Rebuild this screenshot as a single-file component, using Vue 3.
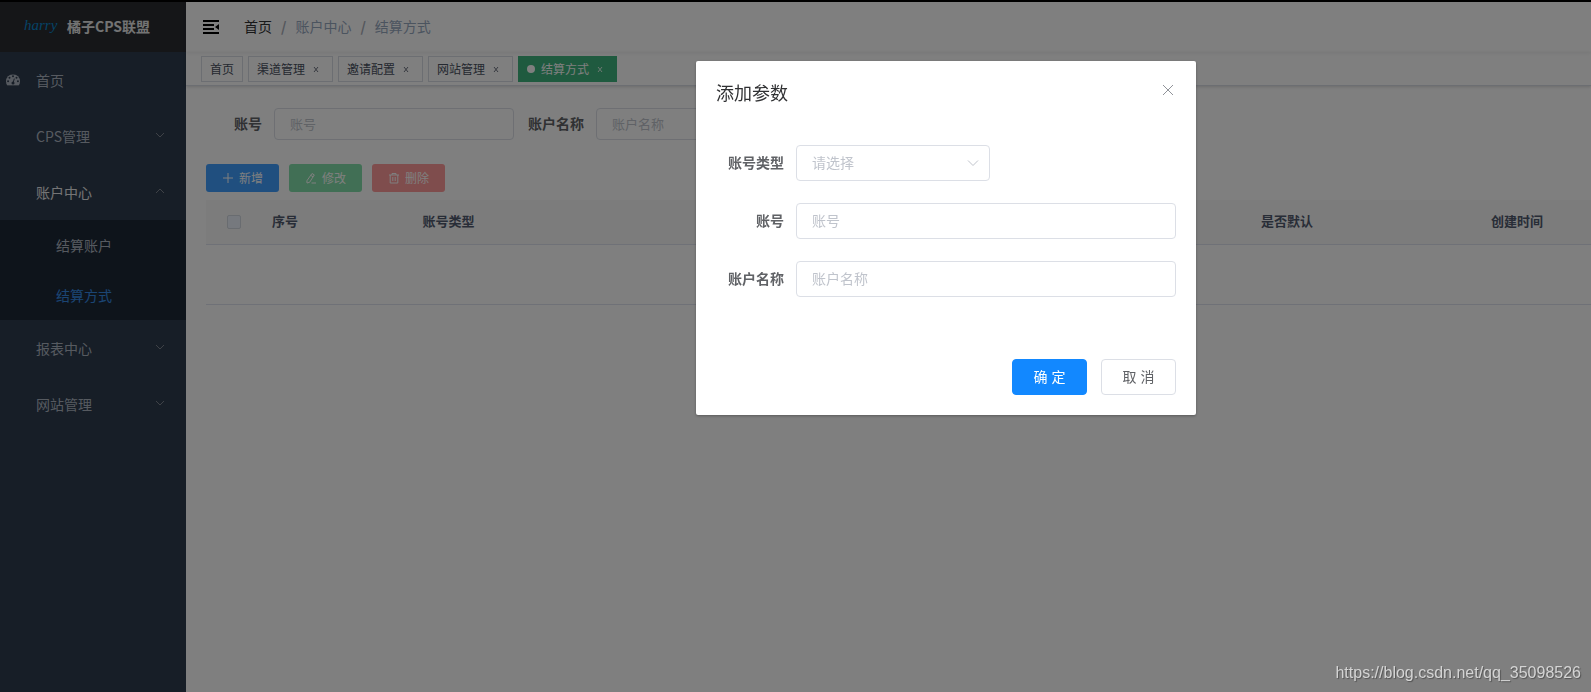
<script setup>
import { ref } from 'vue'

const menu = [
  { label: '首页', icon: true },
  { label: 'CPS管理', arrow: 'down' },
  {
    label: '账户中心',
    arrow: 'up',
    open: true,
    children: [{ label: '结算账户' }, { label: '结算方式', active: true }],
  },
  { label: '报表中心', arrow: 'down' },
  { label: '网站管理', arrow: 'down' },
]

const tags = [
  { label: '首页' },
  { label: '渠道管理', closable: true },
  { label: '邀请配置', closable: true },
  { label: '网站管理', closable: true },
  { label: '结算方式', closable: true, active: true },
]

const query = ref({ account: '', name: '' })
const form = ref({ type: '', account: '', name: '' })
</script>

<template>
  <div class="app">
    <div class="strip"></div>
    <div class="shell">
      <aside class="sidebar">
        <a class="logo" href="#">
          <span class="logo-mark">harry</span>
          <span class="logo-title">橘子CPS联盟</span>
        </a>
        <nav>
          <template v-for="item in menu" :key="item.label">
            <a href="#" class="menu-item" :class="{ open: item.open, 'with-icon': item.icon }">
              <svg v-if="item.icon" class="dash" viewBox="0 0 128 104" aria-hidden="true">
                <mask id="gauge">
                  <path d="M0 64a64 64 0 0 1 128 0c0 14-4 26-10 36q-2 3-5 3H15q-3 0-5-3C4 90 0 78 0 64z" fill="#fff" />
                  <g fill="#000">
                    <circle cx="19" cy="64" r="9" />
                    <circle cx="32" cy="32" r="9" />
                    <circle cx="64" cy="18" r="9" />
                    <circle cx="96" cy="32" r="9" />
                    <circle cx="109" cy="64" r="9" />
                    <circle cx="64" cy="80" r="14" />
                  </g>
                  <path d="M64 80 75 43" stroke="#000" stroke-width="9" stroke-linecap="round" />
                </mask>
                <rect width="128" height="104" fill="currentColor" mask="url(#gauge)" />
              </svg>
              <span>{{ item.label }}</span>
              <svg v-if="item.arrow" class="arrow" viewBox="0 0 12 12" aria-hidden="true">
                <path :d="item.arrow === 'up' ? 'M2 7l4-4 4 4' : 'M2 3l4 4 4-4'" />
              </svg>
            </a>
            <div v-if="item.children" class="submenu">
              <a v-for="c in item.children" :key="c.label" href="#" :class="{ active: c.active }">{{ c.label }}</a>
            </div>
          </template>
        </nav>
      </aside>

      <div class="content">
        <header class="navbar">
          <button class="fold" type="button" aria-label="折叠菜单">
            <svg viewBox="0 0 16 14" aria-hidden="true">
              <path d="M0 0h16v2H0zM0 4h11v2H0zM0 8h11v2H0zM0 12h16v2H0zM16 4v6l-4-3z" />
            </svg>
          </button>
          <nav class="crumbs">
            <a href="#">首页</a><i>/</i><span>账户中心</span><i>/</i><span>结算方式</span>
          </nav>
        </header>

        <div class="tags">
          <a v-for="t in tags" :key="t.label" href="#" class="tag" :class="{ active: t.active }">
            <b v-if="t.active" class="dot"></b>
            <span>{{ t.label }}</span>
            <svg v-if="t.closable" viewBox="0 0 16 16" aria-hidden="true">
              <path d="M6 6l4 5M10 6l-4 5" />
            </svg>
          </a>
        </div>

        <main>
          <form class="search">
            <div class="field">
              <label for="q-account">账号</label>
              <input id="q-account" v-model="query.account" type="text" placeholder="账号" />
            </div>
            <div class="field">
              <label for="q-name">账户名称</label>
              <input id="q-name" v-model="query.name" type="text" placeholder="账户名称" />
            </div>
          </form>

          <div class="actions">
            <button type="button" class="add">
              <svg viewBox="0 0 12 12" aria-hidden="true"><path d="M6 1v10M1 6h10" /></svg>
              <span>新增</span>
            </button>
            <button type="button" class="edit" disabled>
              <svg viewBox="0 0 12 12" aria-hidden="true">
                <path d="M7 1.500 9.300 2.900 4.600 10.300 2 11 1.900 8.800zM5.800 3.400l2.300 1.400M6.500 11H11" />
              </svg>
              <span>修改</span>
            </button>
            <button type="button" class="del" disabled>
              <svg viewBox="0 0 12 12" aria-hidden="true">
                <path d="M1 3h10M4 3V1.500h4V3M2.200 3v8h7.600V3M4.800 5v4M7.200 5v4" />
              </svg>
              <span>删除</span>
            </button>
          </div>

          <table>
            <colgroup>
              <col class="c-check" />
              <col class="c-index" />
              <col class="c-type" />
              <col />
              <col class="c-std" />
              <col class="c-std" />
            </colgroup>
            <thead>
              <tr>
                <th><input type="checkbox" aria-label="全选" /></th>
                <th>序号</th>
                <th>账号类型</th>
                <th></th>
                <th>是否默认</th>
                <th>创建时间</th>
              </tr>
            </thead>
            <tbody>
              <tr><td colspan="6"></td></tr>
            </tbody>
          </table>
        </main>
      </div>
    </div>

    <div class="overlay">
      <section class="dialog" role="dialog" aria-modal="true" aria-labelledby="dlg-title">
        <header>
          <h2 id="dlg-title">添加参数</h2>
          <button type="button" class="close" aria-label="关闭">
            <svg viewBox="0 0 16 16" aria-hidden="true"><path d="M3 3l10 10M13 3L3 13" /></svg>
          </button>
        </header>
        <form class="dialog-body">
          <div class="row">
            <label for="f-type">账号类型</label>
            <div class="select">
              <select id="f-type" v-model="form.type">
                <option value="">请选择</option>
              </select>
              <svg viewBox="0 0 14 14" aria-hidden="true"><path d="M2 4.500l5 5 5-5" /></svg>
            </div>
          </div>
          <div class="row">
            <label for="f-account">账号</label>
            <input id="f-account" v-model="form.account" type="text" placeholder="账号" />
          </div>
          <div class="row">
            <label for="f-name">账户名称</label>
            <input id="f-name" v-model="form.name" type="text" placeholder="账户名称" />
          </div>
        </form>
        <footer>
          <button type="button" class="ok">确 定</button>
          <button type="button" class="cancel">取 消</button>
        </footer>
      </section>
    </div>

    <div class="watermark">https://blog.csdn.net/qq_35098526</div>
  </div>
</template>

<style>
body {
  margin: 0;
  background: #fff;
  overflow: hidden;
}
</style>

<style scoped>
* {
  box-sizing: border-box;
}
.app {
  display: flex;
  flex-direction: column;
  min-height: 100vh;
  overflow: hidden;
  font-family: 'Noto Sans CJK SC', sans-serif;
  font-size: 14px;
  color: #606266;
}
a {
  color: inherit;
  text-decoration: none;
}
button,
input,
select {
  margin: 0;
  font: inherit;
}
svg {
  flex: none;
  fill: none;
  stroke: currentColor;
}
.strip {
  height: 2px;
  background: #000;
}
.shell {
  flex: 1;
  display: flex;
}

/* sidebar */
.sidebar {
  flex: none;
  width: 186px;
  background: #2e3c4e;
  color: #adb5c0;
}
.logo {
  display: flex;
  align-items: center;
  gap: 12px;
  height: 50px;
  padding: 0 0 2px 24px;
  background: #2a2c31;
}
.logo-mark {
  width: 31px;
  padding-bottom: 2px;
  font-family: 'Liberation Serif', serif;
  font-style: italic;
  font-size: 15px;
  line-height: 20px;
  color: #0a86cc;
}
.logo-title {
  font-weight: 700;
  color: #e6e6e6;
}
.menu-item {
  display: flex;
  align-items: center;
  height: 56px;
  padding: 0 20px 0 36px;
}
.menu-item.with-icon {
  gap: 16px;
  padding-left: 6px;
}
.menu-item.open {
  color: #e8e8ea;
}
.dash {
  width: 14px;
  height: 12px;
  stroke: none;
}
.arrow {
  width: 12px;
  height: 12px;
  margin-left: auto;
  color: #7f858e;
}
.submenu {
  background: #1c2936;
}
.submenu a {
  display: flex;
  align-items: center;
  height: 50px;
  padding-left: 56px;
}
.submenu .active {
  color: #368be6;
}

/* top bars */
.content {
  flex: 1;
  min-width: 0;
}
.navbar {
  display: flex;
  align-items: center;
  height: 50px;
  box-shadow: 0 1px 4px rgba(0, 21, 41, 0.08);
}
.fold {
  display: flex;
  padding: 0 17px;
  border: 0;
  background: none;
  color: #000;
}
.fold svg {
  width: 16px;
  height: 14px;
  fill: currentColor;
  stroke: none;
}
.crumbs {
  display: flex;
  padding: 0 0 2px 8px;
  color: #97a8be;
}
.crumbs a {
  color: #303133;
}
.crumbs i {
  margin: 0 9px;
  font-style: normal;
  font-weight: 700;
  color: #a9aeb8;
}
.tags {
  display: flex;
  gap: 5px;
  height: 34px;
  padding: 4px 15px;
  border-bottom: 1px solid #d8dce5;
  box-shadow: 0 1px 3px rgba(0, 0, 0, 0.16);
}
.tag {
  display: flex;
  align-items: center;
  gap: 3px;
  height: 26px;
  padding: 0 8px;
  border: 1px solid #d8dce5;
  font-size: 12px;
  line-height: 16px;
  color: #495060;
}
.tag svg {
  width: 16px;
  height: 16px;
  opacity: 0.8;
}
.tag.active {
  border-color: #3fb57e;
  background: #3fb57e;
  color: #fff;
}
.dot {
  width: 8px;
  height: 8px;
  margin-right: 3px;
  border-radius: 50%;
  background: #fff;
}

/* page */
main {
  padding: 22px 0 20px 20px;
}
.search {
  display: flex;
  gap: 14px;
}
.field {
  display: flex;
  align-items: center;
}
label {
  padding: 0 12px 2px 0;
  text-align: right;
  font-weight: 700;
}
.field label {
  width: 68px;
}
input[type='text'],
select {
  padding: 0 15px 2px;
  border: 1px solid #dcdfe6;
  border-radius: 4px;
  background: #fff;
  outline: none;
}
input::placeholder {
  color: #c0c4cc;
  opacity: 1;
}
.field input {
  width: 240px;
  height: 32px;
  font-size: 13px;
}
.actions {
  display: flex;
  gap: 10px;
  margin: 24px 0 8px;
}
.actions button {
  display: flex;
  align-items: center;
  justify-content: center;
  gap: 5px;
  width: 73px;
  height: 28px;
  padding: 0;
  border: 0;
  border-radius: 3px;
  font-size: 12px;
  color: #fff;
}
.actions svg {
  width: 12px;
  height: 12px;
}
.actions span {
  padding-bottom: 2px;
}
.actions .add {
  background: #409eff;
}
.actions .edit {
  background: #82dfaa;
}
.actions .del {
  background: #ff9a9a;
}
table {
  width: calc(100% + 41px);
  table-layout: fixed;
  border-collapse: separate;
  border-spacing: 0;
  font-size: 13px;
}
.c-check {
  width: 55px;
}
.c-index {
  width: 48px;
}
.c-type {
  width: 279px;
}
.c-std {
  width: 230px;
}
th {
  height: 45px;
  padding: 0 0 4px;
  border-bottom: 1px solid #dfe3ee;
  background: #f8f8f9;
  color: #515a6e;
  font-weight: 700;
}
th:first-child {
  padding: 0;
}
td {
  height: 60px;
  padding: 0;
  border-bottom: 1px solid #dfe3ee;
}
input[type='checkbox'] {
  display: block;
  width: 14px;
  height: 14px;
  margin: 0 auto;
  appearance: none;
  border: 1px solid #d2d8e0;
  border-radius: 2px;
  background: #edf2fc;
}

/* dialog */
.overlay {
  position: fixed;
  inset: 2px 0 0;
  display: flex;
  align-items: flex-start;
  justify-content: center;
  padding: 59px 0 0 301px;
  background: rgba(0, 0, 0, 0.5);
}
.dialog {
  width: 500px;
  border-radius: 2px;
  background: #fff;
  box-shadow: 0 1px 3px rgba(0, 0, 0, 0.3);
}
.dialog header {
  display: flex;
  justify-content: space-between;
  padding: 20px 20px 10px;
}
h2 {
  margin: 0;
  padding-bottom: 2px;
  font-size: 18px;
  line-height: 22px;
  font-weight: 400;
  color: #303133;
}
.close {
  height: 18px;
  padding: 0;
  border: 0;
  background: none;
  color: #909399;
}
.close svg {
  display: block;
  width: 16px;
  height: 16px;
}
.dialog-body {
  display: flex;
  flex-direction: column;
  gap: 22px;
  padding: 30px 20px 52px;
}
.row {
  display: flex;
  align-items: center;
}
.row label {
  flex: none;
  width: 80px;
}
.row input {
  flex: 1;
  height: 36px;
}
.select {
  position: relative;
  width: 194px;
}
select {
  display: block;
  width: 100%;
  height: 36px;
  appearance: none;
  color: #c0c4cc;
}
.select svg {
  position: absolute;
  top: 11px;
  right: 10px;
  width: 14px;
  height: 14px;
  color: #c0c4cc;
  pointer-events: none;
}
.dialog footer {
  display: flex;
  justify-content: flex-end;
  gap: 14px;
  padding: 10px 20px 20px;
}
.dialog footer button {
  width: 75px;
  height: 36px;
  padding: 0 0 2px;
  border: 1px solid #dcdfe6;
  border-radius: 4px;
  background: #fff;
  font-family: 'Liberation Sans', 'Noto Sans CJK SC', sans-serif;
  color: #606266;
}
.dialog footer .ok {
  border-color: #1288ff;
  background: #1288ff;
  color: #fff;
}
.watermark {
  position: fixed;
  right: 10px;
  bottom: 9px;
  font-family: 'Liberation Sans', sans-serif;
  font-size: 16px;
  line-height: 20px;
  color: #d4d4d4;
  text-shadow: 1px 1px 1px rgba(0, 0, 0, 0.35);
}
</style>
